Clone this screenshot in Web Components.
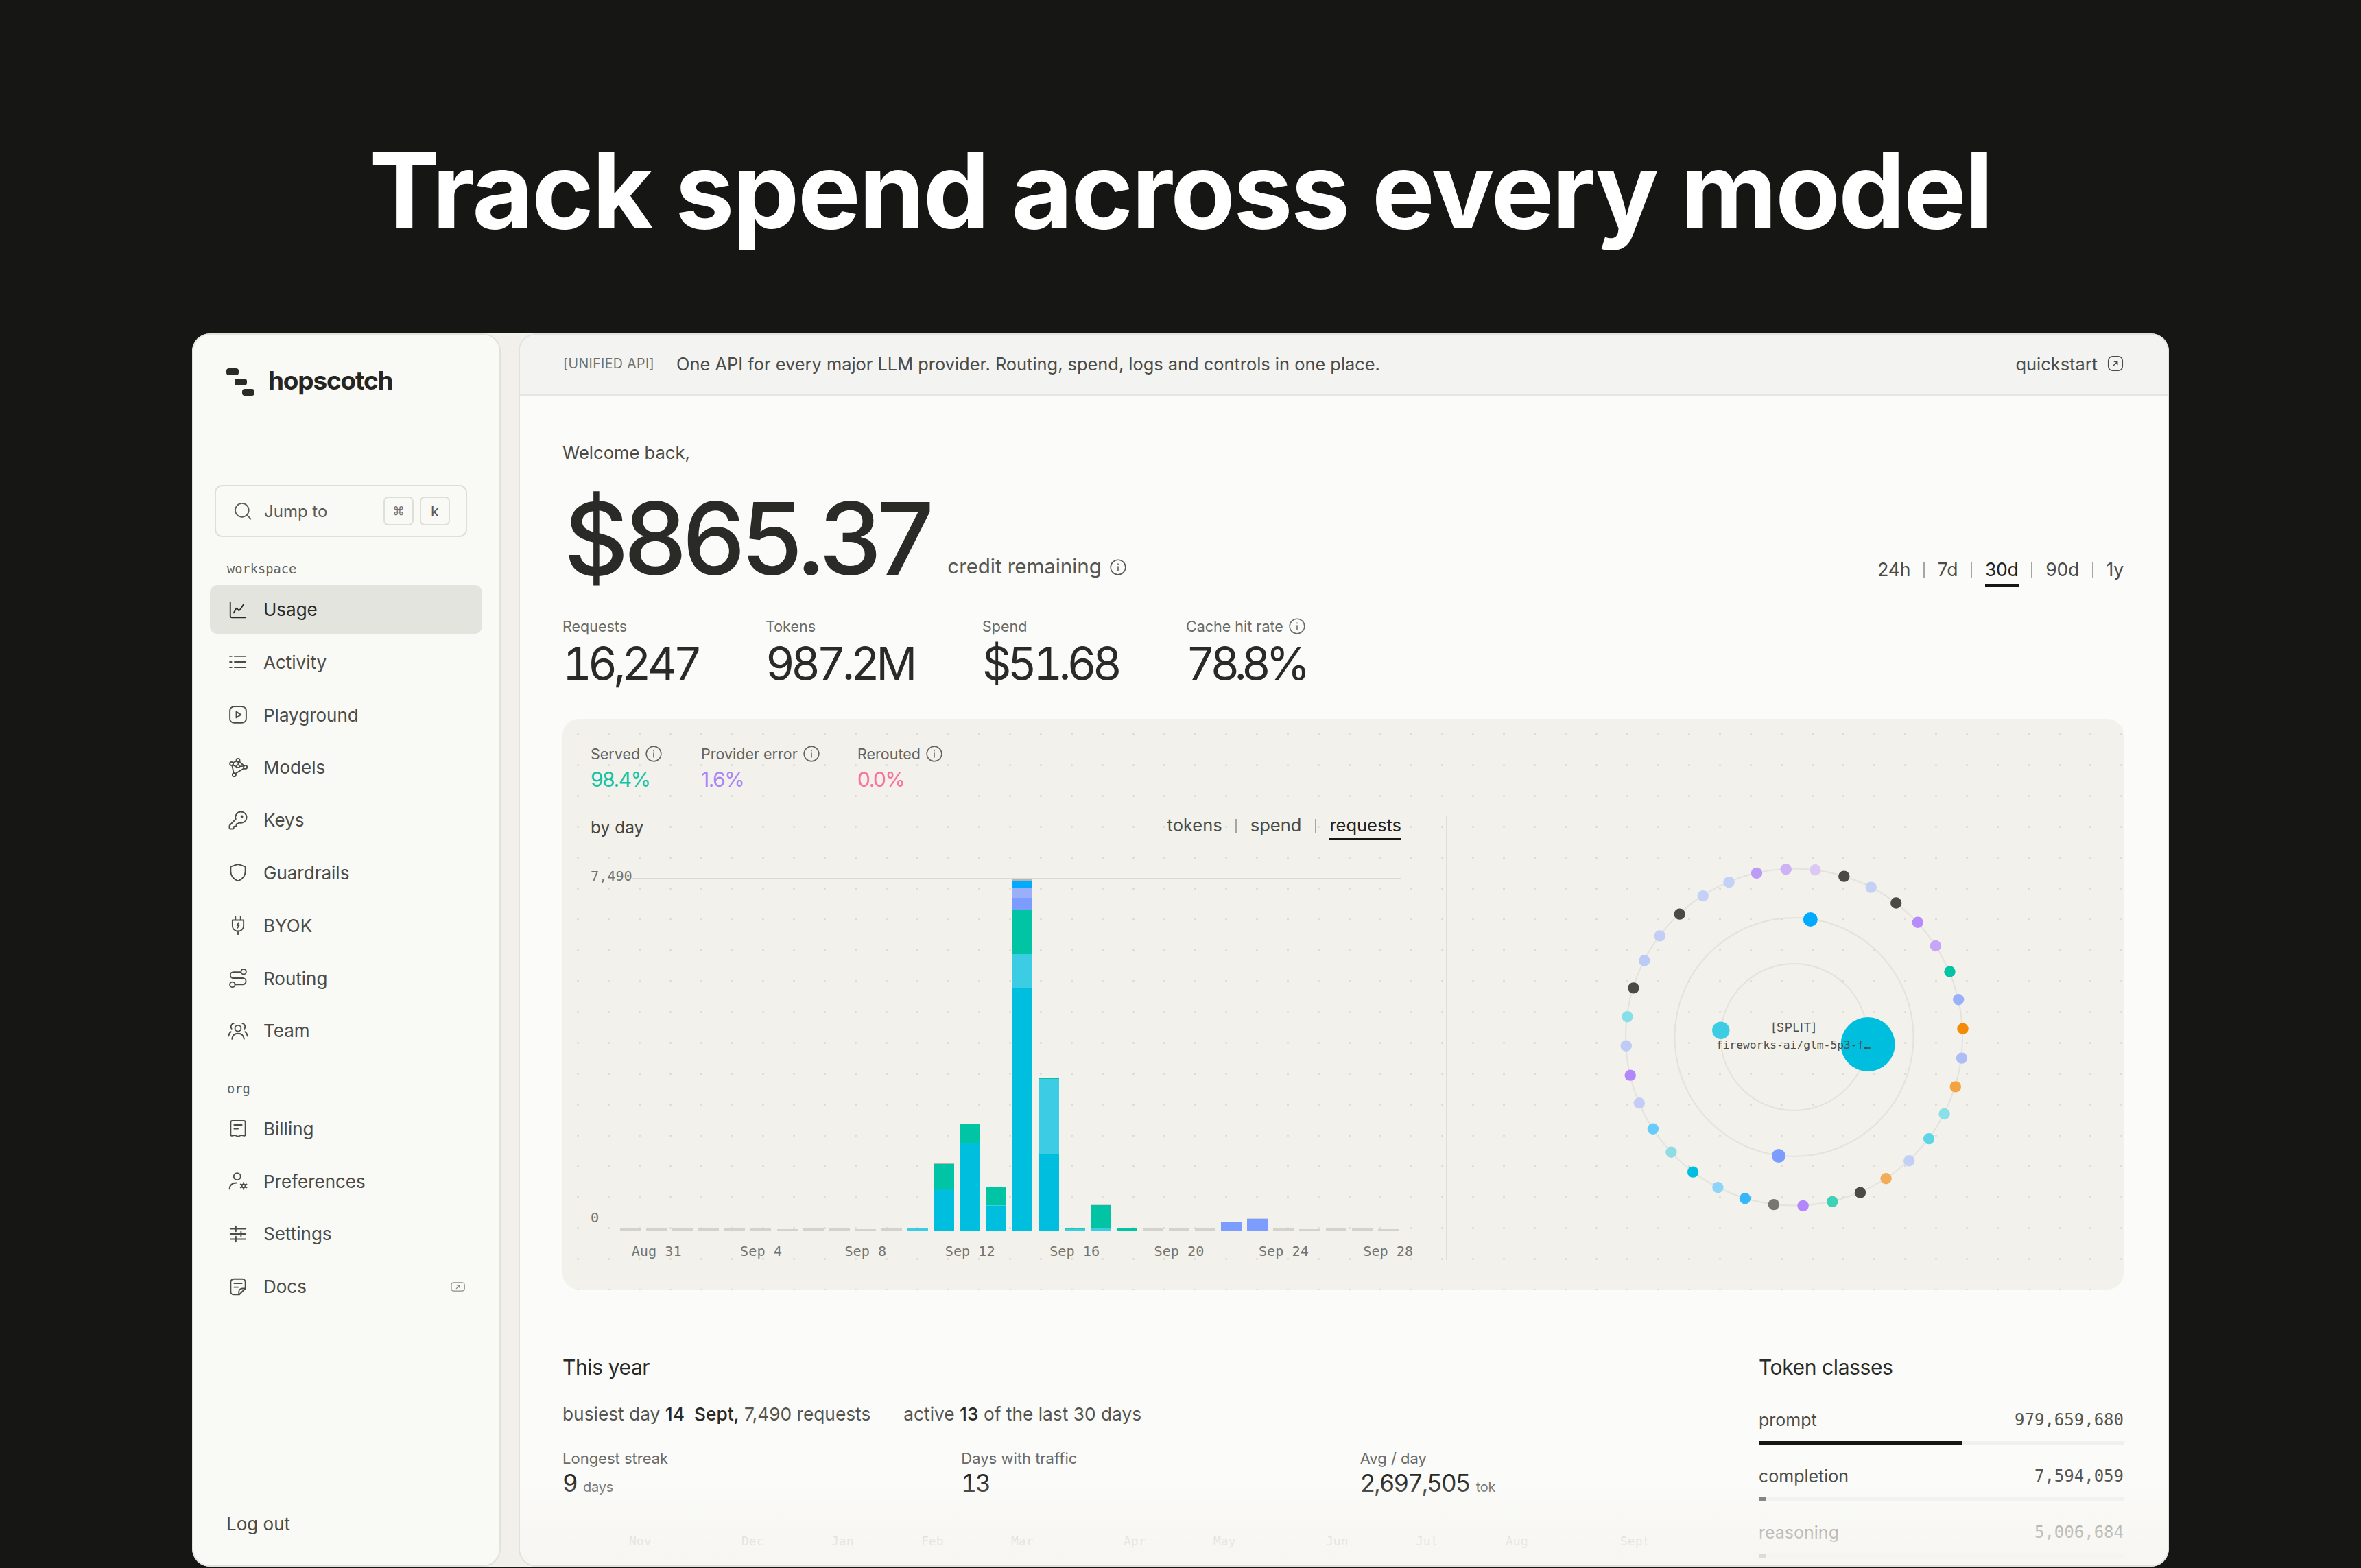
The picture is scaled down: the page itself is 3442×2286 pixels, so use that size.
<!DOCTYPE html>
<html lang="en">
<head>
<meta charset="utf-8">
<title>hopscotch</title>
<style>
	html, body { margin: 0; padding: 0; background: #161615; height: 2286px; overflow: hidden; }
	body { font-family: Inter, "Liberation Sans", sans-serif; }
</style>
</head>
<body>
<hs-page>
	<h1 slot="title">Track spend across every model</h1>
	<hs-sidebar slot="side"></hs-sidebar>
	<hs-main slot="main">
		<hs-overview></hs-overview>
		<hs-card></hs-card>
		<hs-year></hs-year>
	</hs-main>
</hs-page>
<script>
const MONO = `"DejaVu Sans Mono", "Liberation Mono", monospace`;

const ICONS = {
	usage: `<path d="M3 3v16a2 2 0 0 0 2 2h16"/><path d="M7 15.500c1.200-1.500 2-4.500 3.500-5.500l2.500 3c2-1.500 3.500-4 5.500-7.500"/>`,
	activity: `<path d="M8 5.500h13M8 12h13M8 18.500h13M2.500 5.500h2M2.500 12h2M2.500 18.500h2"/>`,
	playground: `<rect x="2.500" y="2.500" width="19" height="19" rx="5"/><path d="M10 8.500v7l5.500-3.500z"/>`,
	models: `<circle cx="4.500" cy="7.500" r="2"/><circle cx="12" cy="3.500" r="2"/><circle cx="20.500" cy="11.500" r="2"/><circle cx="7.500" cy="20.500" r="2"/><circle cx="12" cy="10.500" r="1.600"/><path d="M6.300 6.500l3.900-2.100M13.500 5l5.500 5M5 9.500l2 9M9 19l10.200-6.200M12.300 5.500v3.400M10.800 11.500l-5-2.500M13.600 10.700l5-.4"/>`,
	keys: `<path d="M2.586 17.414A2 2 0 0 0 2 18.828V21a1 1 0 0 0 1 1h3a1 1 0 0 0 1-1v-1a1 1 0 0 1 1-1h1a1 1 0 0 0 1-1v-1a1 1 0 0 1 1-1h.172a2 2 0 0 0 1.414-.586l.814-.814a6.500 6.500 0 1 0-4-4z"/><circle cx="16.500" cy="7.500" r=".8"/>`,
	guardrails: `<path d="M3.500 5.300C6 4.300 9 3 12 2.500c3 .5 6 1.800 8.500 2.800V11c0 5.500-3.500 8.800-8.500 10.800C7 19.800 3.500 16.500 3.500 11z"/>`,
	byok: `<path d="M9 1.500v4.500M15 1.500v4.500M12 18.500v4M5.500 6h13v6.500a6.500 6.500 0 0 1-13 0z"/><path d="M12.800 9l-1.800 3h2.200l-1.800 3"/>`,
	routing: `<circle cx="5.500" cy="19.500" r="3"/><path d="M8.500 19.500h9a3.500 3.500 0 0 0 0-7.500h-11a3.500 3.500 0 0 1 0-7H14.500"/><circle cx="18.500" cy="4.500" r="3"/>`,
	team: `<circle cx="12" cy="9" r="3.500"/><path d="M5 21.500c.5-4 3.200-6.500 7-6.500s6.500 2.500 7 6.500"/><path d="M7 3.200a4 4 0 0 0-2.500 6.300M17 3.200a4 4 0 0 1 2.500 6.300M1 18c.3-2.300 1.300-4 2.800-5M23 18c-.3-2.300-1.300-4-2.800-5"/>`,
	billing: `<path d="M3.500 5A1.800 1.800 0 0 1 5.300 3.200h13.400A1.800 1.800 0 0 1 20.500 5v14.500c0 1-1 1.300-2 1-1.500-.5-3-.8-4 0-1.200 1-3.800 1-5 0-1-.8-2.500-.5-4 0-1 .3-2-.000-2-1z"/><path d="M7.500 8h9M7.500 12.500h4.500"/>`,
	preferences: `<circle cx="11" cy="6.500" r="4"/><path d="M2 21c.5-4.500 3.500-7 8-7"/><circle cx="18.500" cy="17.500" r="2"/><path d="M18.500 13.500v2M18.500 19.500v2M15 15.500l1.700 1M20.300 18.500l1.700 1M15 19.500l1.700-1M20.300 16.500l1.700-1"/>`,
	settings: `<path d="M3 6h18M3 12h18M3 18h18M9.500 3v6M15.500 9v6M9.500 15v6"/>`,
	docs: `<path d="M3.500 6.500a3.500 3.500 0 0 1 3.500-3.500h10a3.500 3.500 0 0 1 3.500 3.500v7.500l-7 7H7a3.500 3.500 0 0 1-3.500-3.500z"/><path d="M20.500 14h-3.500a4 4 0 0 0-4 4v3"/><path d="M7.500 8h9M7.500 12.500h4.500"/>`,
	ext: `<rect x="2.500" y="2.500" width="19" height="19" rx="5.500"/><path d="M9.500 14.500l5-5M10.500 9.500h4v4"/>`,
	extwide: `<rect x="1" y="1" width="22" height="14" rx="4"/><path d="M9.500 11l5-5M10.500 5.500h4.300v4"/>`,
	info: `<circle cx="12" cy="12" r="10"/><path d="M12 11v5.500M12 7.500v.5"/>`,
	search: `<circle cx="11" cy="11" r="8.500"/><path d="M22 22l-4.800-4.800"/>`
};

class HsIcon extends HTMLElement {
	constructor() {
		super();
		const name = this.getAttribute('name');
		const size = this.getAttribute('size') || 30;
		const wide = name === 'extwide';
		const sw = this.getAttribute('stroke') || 1.5;
		this.attachShadow({ mode: 'open' });
		this.shadowRoot.innerHTML = `
		<style>
			:host { display: inline-flex; flex: none; line-height: 0; }
			svg { fill: none; stroke: currentColor; stroke-linecap: round; stroke-linejoin: round; }
		</style>
		<svg width="${size}" height="${wide ? Math.round(size * 16 / 24) : size}" viewBox="0 0 24 ${wide ? 16 : 24}" stroke-width="${sw}">${ICONS[name]}</svg>`;
	}
}
customElements.define('hs-icon', HsIcon);

class HsPage extends HTMLElement {
	constructor() {
		super();
		this.attachShadow({ mode: 'open' });
		this.shadowRoot.innerHTML = `
		<style>
			:host { display: block; height: 2284px; }
			.hero { height: 486px; box-sizing: border-box; padding-top: 189px; display: flex; justify-content: center; }
			::slotted(h1) {
				margin: 0; color: #fff; font-size: 154px; line-height: 176px; font-weight: 700;
				letter-spacing: -2.400px; white-space: nowrap;
			}
			.frame {
				margin: 0 280px; height: 1798px; display: flex; gap: 26px; background: #f1f0eb;
				border-radius: 26px; overflow: hidden;
			}
		</style>
		<div class="hero"><slot name="title"></slot></div>
		<div class="frame"><slot name="side"></slot><slot name="main"></slot></div>`;
	}
}
customElements.define('hs-page', HsPage);

class HsNavItem extends HTMLElement {
	constructor() {
		super();
		const active = this.hasAttribute('active');
		this.attachShadow({ mode: 'open' });
		this.shadowRoot.innerHTML = `
		<style>
			:host { display: flex; align-items: center; height: 71px; padding: 0 25px 0 27px; gap: 24px; border-radius: 11px;
				font-size: 26px; color: #4b4b47; background: ${active ? '#e4e4df' : 'transparent'}; }
			:host([active]) { color: #2a2a27; }
			.t { flex: 1; }
			.i { margin: 0 -1.500px; }
		</style>
		<hs-icon class="i" name="${this.getAttribute('icon')}"></hs-icon>
		<span class="t"><slot></slot></span>
		<slot name="end"></slot>`;
	}
}
customElements.define('hs-nav-item', HsNavItem);

class HsSidebar extends HTMLElement {
	constructor() {
		super();
		this.attachShadow({ mode: 'open' });
		this.shadowRoot.innerHTML = `
		<style>
			:host { display: flex; flex-direction: column; box-sizing: border-box; width: 450px; height: 1798px;
				background: #f9f9f6; border: 2px solid #e2e2dd; border-radius: 26px; padding: 0 0 0 24px; margin: 0; }
			.logo { display: flex; align-items: center; gap: 20px; margin: 49px 0 0 24px; height: 40px;
				font-size: 37px; font-weight: 700; color: #252522; letter-spacing: -1.200px; }
			.logo span { margin-top: -6px; }
			.search { box-sizing: border-box; width: 368px; height: 76px; margin: 130px 0 0 7px; display: flex; align-items: center;
				border: 2px solid #dfdfda; border-radius: 11px; padding: 0 23px 0 25px; font-size: 24px; color: #5b5b57; }
			.search span { margin-left: 17px; flex: 1; }
			kbd { box-sizing: border-box; width: 44px; height: 42px; border: 2px solid #dfdfda; border-radius: 7px; margin-left: 9px;
				display: flex; align-items: center; justify-content: center; font: 22px Inter, sans-serif; color: #5b5b57; }
			kbd.cmd { font-size: 17px; color: #6f6f6b; }
			.sec { font: 18.700px/22px ${MONO}; color: #5f5f5b; margin: 36px 0 12px 25px; }
			.org { margin-top: 38.500px; margin-bottom: 11px; }
			nav { display: flex; flex-direction: column; gap: 5.800px; width: 397px; }
			.logout { margin: auto 0 45px 24px; font-size: 26px; color: #4b4b47; line-height: 30px; }
			.end { color: #8d8d88; }
		</style>
		<div class="logo">
			<svg width="41" height="40" viewBox="0 0 41 40" fill="#2a2a26">
				<rect x="0" y="0" width="18" height="10" rx="4"/>
				<rect x="12" y="15" width="18" height="10" rx="4"/>
				<rect x="23" y="30" width="18" height="10" rx="4"/>
			</svg>
			<span>hopscotch</span>
		</div>
		<div class="search">
			<hs-icon name="search" size="28"></hs-icon><span>Jump to</span><kbd class="cmd">⌘</kbd><kbd>k</kbd>
		</div>
		<div class="sec">workspace</div>
		<nav>
			<hs-nav-item icon="usage" active>Usage</hs-nav-item>
			<hs-nav-item icon="activity">Activity</hs-nav-item>
			<hs-nav-item icon="playground">Playground</hs-nav-item>
			<hs-nav-item icon="models">Models</hs-nav-item>
			<hs-nav-item icon="keys">Keys</hs-nav-item>
			<hs-nav-item icon="guardrails">Guardrails</hs-nav-item>
			<hs-nav-item icon="byok">BYOK</hs-nav-item>
			<hs-nav-item icon="routing">Routing</hs-nav-item>
			<hs-nav-item icon="team">Team</hs-nav-item>
		</nav>
		<div class="sec org">org</div>
		<nav>
			<hs-nav-item icon="billing">Billing</hs-nav-item>
			<hs-nav-item icon="preferences">Preferences</hs-nav-item>
			<hs-nav-item icon="settings">Settings</hs-nav-item>
			<hs-nav-item icon="docs">Docs<hs-icon slot="end" class="end" name="extwide" size="21" stroke="1.6"></hs-icon></hs-nav-item>
		</nav>
		<div class="logout">Log out</div>`;
	}
}
customElements.define('hs-sidebar', HsSidebar);

class HsMain extends HTMLElement {
	constructor() {
		super();
		this.attachShadow({ mode: 'open' });
		this.shadowRoot.innerHTML = `
		<style>
			:host { display: block; box-sizing: border-box; position: relative; width: 2406px; height: 1798px; background: #fbfbf9;
				border: 2px solid #e2e2dd; border-radius: 26px; overflow: hidden; }
			header { box-sizing: border-box; height: 89px; background: #f3f3f2; border-bottom: 2px solid #e6e6e3; display: flex; align-items: center;
				padding: 0 63px 3px 63px; font-size: 25.400px; color: #4b4b47; }
			.tag { font-size: 19.500px; color: #70706c; margin-right: 32px; letter-spacing: .4px; }
			.msg { flex: 1; }
			.qs { display: flex; align-items: center; gap: 13px; }
			.content { padding: 0 64px 0 62px; }
			.fade { position: absolute; left: 0; right: 0; bottom: 0; height: 125px;
				background: linear-gradient(to bottom, rgba(247,246,242,0), rgba(247,246,242,.55) 45%, rgba(246,245,241,.9) 100%); }
		</style>
		<header>
			<span class="tag">[UNIFIED API]</span>
			<span class="msg">One API for every major LLM provider. Routing, spend, logs and controls in one place.</span>
			<span class="qs">quickstart <hs-icon name="ext" size="26" stroke="1.400"></hs-icon></span>
		</header>
		<div class="content"><slot></slot></div>
		<div class="fade"></div>`;
	}
}
customElements.define('hs-main', HsMain);

class HsStat extends HTMLElement {
	constructor() {
		super();
		this.attachShadow({ mode: 'open' });
		this.shadowRoot.innerHTML = `
		<style>
			:host { display: block; }
			.l { display: flex; align-items: center; gap: 7px; height: 22px; font-size: 21.500px; line-height: 22px; color: #6a6a66; }
			.v { margin-top: 10px; font-size: 66px; line-height: 66px; font-weight: 400; color: #2a2a27; letter-spacing: var(--track, -5.500px);
				font-variant-numeric: tabular-nums; }
		</style>
		<div class="l"><span>${this.getAttribute('label')}</span>${this.hasAttribute('info') ? '<hs-icon name="info" size="26" stroke="1.400"></hs-icon>' : ''}</div>
		<div class="v"><slot></slot></div>`;
	}
}
customElements.define('hs-stat', HsStat);

class HsOverview extends HTMLElement {
	constructor() {
		super();
		this.attachShadow({ mode: 'open' });
		const ranges = ['24h', '7d', '30d', '90d', '1y'];
		this.shadowRoot.innerHTML = `
		<style>
			:host { display: block; }
			.hi { margin-top: 68px; font-size: 25.600px; line-height: 30px; color: #4b4b47; }
			.top { display: flex; align-items: flex-end; margin-top: 38px; }
			.amt { font-size: 146px; line-height: 144px; font-weight: 500; color: #2a2a27; letter-spacing: -6.700px; margin-left: 2px; }
			.cred { display: flex; align-items: center; gap: 11px; margin: 0 0 17px 26px; font-size: 29.600px; line-height: 30px; color: #555551; flex: 1; letter-spacing: -.1px; }
			.cred hs-icon { margin-top: 4px; }
			.range { display: flex; align-items: flex-start; font-size: 26.500px; line-height: 30px; color: #4b4b47; margin-bottom: 1px; letter-spacing: -.2px; }
			.range i { display: block; width: 2px; height: 23px; background: #a6a6a2; margin: 4px 18.800px 0; }
			.range span { padding-bottom: 7px; }
			.range .on { color: #222; border-bottom: 4px solid #161615; }
			.stats { display: flex; margin-top: 45px; }
			.stats hs-stat { flex: none; }
		</style>
		<div class="hi">Welcome back,</div>
		<div class="top">
			<div class="amt">$865.37</div>
			<div class="cred">credit remaining <hs-icon name="info" size="26" stroke="1.400"></hs-icon></div>
			<div class="range">${ranges.map(r => `<span class="${r === '30d' ? 'on' : ''}">${r}</span>`).join('<i></i>')}</div>
		</div>
		<div class="stats">
			<hs-stat label="Requests" style="width:296px">16,247</hs-stat>
			<hs-stat label="Tokens" style="width:316px">987.2M</hs-stat>
			<hs-stat label="Spend" style="width:297px">$51.68</hs-stat>
			<hs-stat label="Cache hit rate" info style="--track:-7.400px">78.8%</hs-stat>
		</div>`;
	}
}
customElements.define('hs-overview', HsOverview);

// bottom to top, heights in px
const C = { cyan: '#00bfde', light: '#3ccde4', green: '#00c4a4', teal: '#22c9b4', peri: '#7c9cff', lav: '#9aaff8', blue: '#00aaff', grey: '#d3d2cc', dim: '#b5b4ae' };
const BARS = [
	[['grey', 3]], [['grey', 3]], [['grey', 3]], [['grey', 3]], [['grey', 3]], [['grey', 3]], [['grey', 2]], [['grey', 3]], [['grey', 3]], [['grey', 2]],
	[['grey', 3]],
	[['light', 3], ['grey', 1]],
	[['cyan', 60], ['light', 1], ['green', 36], ['dim', 2]],
	[['cyan', 127], ['light', 1], ['green', 28]],
	[['cyan', 36], ['light', 1], ['green', 26]],
	[['cyan', 354], ['light', 49], ['green', 64], ['peri', 18], ['lav', 15], ['blue', 9], ['dim', 4]],
	[['cyan', 111], ['light', 110], ['green', 2]],
	[['light', 2], ['teal', 2]],
	[['light', 3], ['green', 34], ['grey', 1]],
	[['green', 3]],
	[['grey', 4]], [['grey', 3]], [['grey', 3]],
	[['peri', 12], ['dim', 1]],
	[['peri', 17], ['grey', 1]],
	[['grey', 3]], [['grey', 2]], [['grey', 3]], [['grey', 3]], [['grey', 2]]
];
const DATES = ['Aug 31', 'Sep 4', 'Sep 8', 'Sep 12', 'Sep 16', 'Sep 20', 'Sep 24', 'Sep 28'];

class HsBars extends HTMLElement {
	constructor() {
		super();
		this.attachShadow({ mode: 'open' });
		const cols = BARS.map(b => `<div class="bar">${b.map(([c, h]) => `<div style="height:${h}px;background:${C[c]}"></div>`).join('')}</div>`).join('');
		const labels = DATES.map((d, i) => `<span style="grid-column:${2 + i * 4}">${d}</span>`).join('');
		this.shadowRoot.innerHTML = `
		<style>
			:host { display: block; position: relative; font-family: ${MONO}; font-size: 20.200px; color: #747470; }
			.max { display: flex; align-items: flex-end; height: 54px; }
			.max span { margin-bottom: -6px; line-height: 22px; }
			.max i { flex: 1; height: 2px; background: #dbdad5; }
			.plot { position: relative; margin-left: 43px; height: 513px; display: grid; grid-template-columns: repeat(30, 30px); column-gap: 8.100px; align-items: end; margin-top: -1px; }
			.bar { display: flex; flex-direction: column-reverse; }
			.zero { position: absolute; left: 0; top: 537px; line-height: 20px; }
			.x { margin: 20px 0 0 43px; display: grid; grid-template-columns: repeat(30, 30px); column-gap: 8.100px; line-height: 20px; }
			.x span { justify-self: center; white-space: nowrap; }
		</style>
		<div class="max"><span>7,490</span><i></i></div>
		<div class="plot">${cols}</div>
		<span class="zero">0</span>
		<div class="x">${labels}</div>`;
	}
}
customElements.define('hs-bars', HsBars);

// positions measured on a 620x560 box, scaled
const RING = [
	[660,123,'#bc9cf7'],[768,107,'#cdb3f5'],[876,110,'#dcc8f5'],[982,136,'#4b4b46'],[1082,181,'#c3d1f7'],[1174,245,'#4b4b46'],
	[1254,324,'#b68cfc'],[1320,420,'#c6a6f7'],[1372,525,'#00c4a4'],[1404,639,'#9ab0fb'],[1420,758,'#f58a07'],[1416,878,'#aebdf8'],
	[1393,995,'#f3a33f'],[1352,1106,'#8ae0e9'],[1295,1207,'#5cd6e6'],[1222,1297,'#c3d0f6'],[1137,1370,'#f3ac57'],[1042,1427,'#4b4b46'],
	[939,1464,'#3dd1b6'],[831,1481,'#b287fb'],[723,1476,'#777772'],[617,1451,'#36b7fc'],[517,1406,'#8ed4f8'],[425,1343,'#00bfde'],
	[345,1262,'#8fdde3'],[278,1167,'#67ccfc'],[227,1062,'#c3cdf7'],[194,948,'#b287fb'],[179,828,'#bfcbf5'],[183,709,'#86dee9'],
	[206,592,'#4b4b46'],[246,480,'#bccbf6'],[303,379,'#c3cef6'],[376,290,'#4b4b46'],[462,216,'#c3d1f7'],[558,160,'#c3d1f7']
];
const INNER = [
	[858,312,10.500,'#00aaff'],[741,1277,10,'#7c9cff'],[528,765,12.700,'#3ccde4'],[1070,822,39.500,'#00bfde']
];

class HsOrbit extends HTMLElement {
	constructor() {
		super();
		this.attachShadow({ mode: 'open' });
		const X = v => (v / 2.529).toFixed(1), Y = v => (v / 2.8).toFixed(1);
		const cx = 315.500, cy = 283;
		this.shadowRoot.innerHTML = `
		<style>
			:host { display: block; width: 620px; height: 560px; }
			svg { display: block; }
			text { font-family: ${MONO}; fill: #4d4d48; }
		</style>
		<svg width="620" height="560" viewBox="0 0 620 560">
			<g fill="none" stroke="#e3e2dc" stroke-width="2">
				<circle cx="${cx}" cy="${cy}" r="245.500"/>
				<circle cx="${cx}" cy="${cy}" r="174"/>
				<circle cx="${cx}" cy="${cy}" r="107"/>
			</g>
			${RING.map(([x, y, c]) => `<circle cx="${X(x)}" cy="${Y(y)}" r="8.200" fill="${c}"/>`).join('')}
			${INNER.map(([x, y, r, c]) => `<circle cx="${X(x)}" cy="${Y(y)}" r="${r}" fill="${c}"/>`).join('')}
			<text x="${cx}" y="275" font-size="17.500" text-anchor="middle" style="font-family:Inter,sans-serif;letter-spacing:.6px">[SPLIT]</text>
			<text x="${cx - 1}" y="300" font-size="16.300" text-anchor="middle">fireworks-ai/glm-5p3-f…</text>
		</svg>`;
	}
}
customElements.define('hs-orbit', HsOrbit);

class HsCard extends HTMLElement {
	constructor() {
		super();
		this.attachShadow({ mode: 'open' });
		const status = [['Served', '98.4%', '#13c4a3', 161], ['Provider error', '1.6%', '#a885f7', 228], ['Rerouted', '0.0%', '#fb7196', 0]];
		this.shadowRoot.innerHTML = `
		<style>
			:host { display: block; box-sizing: border-box; height: 832px; margin-top: 48px; padding: 38px 0 45px 41px; border-radius: 24px;
				background-color: #f2f1ec;
				background-image: radial-gradient(circle at center, #dcdbd4 1.200px, transparent 1.800px);
				background-size: 45px 45px; }
			.status { display: flex; }
			.s .l { display: flex; align-items: center; gap: 7px; font-size: 21.500px; line-height: 22px; color: #636360; }
			.s .v { margin-top: 7px; font-size: 30px; line-height: 34px; letter-spacing: -1.500px; }
			.cols { display: grid; grid-template-columns: 1249px 1fr; margin-top: 36px; height: 648px; }
			.left { border-right: 2px solid #dfded9; padding-right: 65px; }
			.head { display: flex; justify-content: space-between; height: 39px; box-sizing: border-box; }
			.by { font-size: 24.500px; line-height: 34px; color: #44443f; }
			.tabs { display: flex; font-size: 25.500px; line-height: 28px; color: #4b4b47; }
			.tabs i { display: block; width: 2px; height: 20px; background: #a6a6a2; margin: 5px 19.500px 0; }
			.tabs span { padding-bottom: 5px; height: 28px; }
			.tabs .on { color: #222; border-bottom: 3px solid #161615; }
			.right { display: flex; align-items: center; justify-content: center; padding: 0 0 8px 13px; }
		</style>
		<div class="status">
			${status.map(([l, v, c, w]) => `<div class="s" style="${w ? `width:${w}px` : ''}">
				<div class="l"><span>${l}</span><hs-icon name="info" size="26" stroke="1.400"></hs-icon></div>
				<div class="v" style="color:${c}">${v}</div>
			</div>`).join('')}
		</div>
		<div class="cols">
			<div class="left">
				<div class="head"><span class="by">by day</span>
					<div class="tabs"><span>tokens</span><i></i><span>spend</span><i></i><span class="on">requests</span></div>
				</div>
				<hs-bars></hs-bars>
			</div>
			<div class="right"><hs-orbit></hs-orbit></div>
		</div>`;
	}
}
customElements.define('hs-card', HsCard);

class HsToken extends HTMLElement {
	constructor() {
		super();
		this.attachShadow({ mode: 'open' });
		this.shadowRoot.innerHTML = `
		<style>
			:host { display: block; margin-bottom: 30px; }
			.r { display: flex; justify-content: space-between; line-height: 30px; font-size: 25px; color: #4b4b47; }
			.n { font-family: ${MONO}; font-size: 24px; color: #555551; }
			.t { margin-top: 16px; height: 6px; background: #f0f0ee; }
			.f { height: 100%; background: ${this.getAttribute('fill') || '#161615'}; width: ${this.getAttribute('w')}; }
		</style>
		<div class="r"><span>${this.getAttribute('label')}</span><span class="n"><slot></slot></span></div>
		<div class="t"><div class="f"></div></div>`;
	}
}
customElements.define('hs-token', HsToken);

class HsYear extends HTMLElement {
	constructor() {
		super();
		this.attachShadow({ mode: 'open' });
		const months = [['Nov', 164], ['Dec', 131], ['Jan', 131], ['Feb', 131], ['Mar', 164], ['Apr', 131], ['May', 164], ['Jun', 131], ['Jul', 131], ['Aug', 167], ['Sept', 60]];
		this.shadowRoot.innerHTML = `
		<style>
			:host { display: grid; grid-template-columns: 1744px 532px; margin-top: 95px; }
			h2 { margin: 0; font-size: 30px; line-height: 36px; font-weight: 400; color: #2a2a27; letter-spacing: -.4px; }
			.line { display: flex; gap: 48px; margin-top: 36px; font-size: 26.300px; line-height: 30px; color: #555551; white-space: pre; }
			.line b { font-weight: 500; color: #2a2a27; }
			.tri { display: grid; grid-template-columns: repeat(3, 1fr); margin-top: 37px; }
			.lab { font-size: 22px; line-height: 24px; color: #6a6a66; }
			.val { margin-top: 4px; font-size: 35px; line-height: 40px; color: #2a2a27; letter-spacing: -2px; font-variant-numeric: tabular-nums; }
			.val small { font-size: 20px; color: #6a6a66; letter-spacing: -.3px; margin-left: 2px; }
			.months { display: flex; margin: 48px 0 0 97px; font: 18px/22px ${MONO}; color: #b9b9b3; }
			.tokens h2 { margin-bottom: 44px; }
		</style>
		<div>
			<h2>This year</h2>
			<div class="line"><span>busiest day <b>14  Sept,</b> 7,490 requests</span><span>active <b>13</b> of the last 30 days</span></div>
			<div class="tri">
				<div><div class="lab">Longest streak</div><div class="val">9 <small>days</small></div></div>
				<div><div class="lab">Days with traffic</div><div class="val">13</div></div>
				<div><div class="lab">Avg / day</div><div class="val">2,697,505 <small>tok</small></div></div>
			</div>
			<div class="months">${months.map(([m, w]) => `<span style="width:${w}px">${m}</span>`).join('')}</div>
		</div>
		<div class="tokens">
			<h2>Token classes</h2>
			<hs-token label="prompt" w="55.600%">979,659,680</hs-token>
			<hs-token label="completion" w="11px" fill="#5a5a56">7,594,059</hs-token>
			<hs-token label="reasoning" w="11px" fill="#5a5a56">5,006,684</hs-token>
		</div>`;
	}
}
customElements.define('hs-year', HsYear);
</script>
</body>
</html>
